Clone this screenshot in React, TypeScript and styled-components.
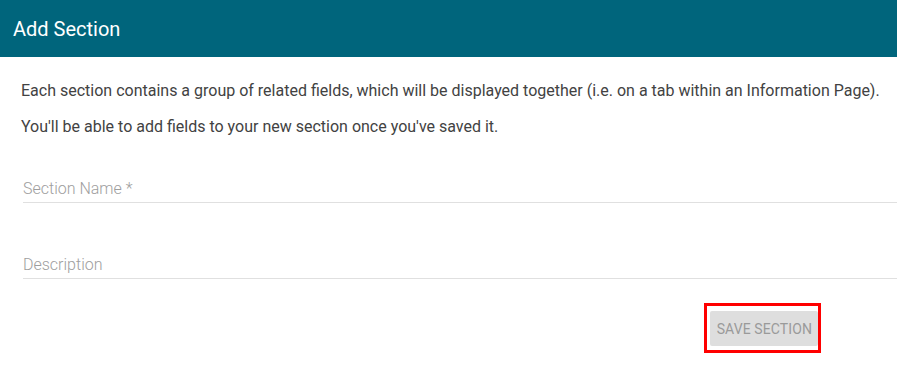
import styled, { createGlobalStyle } from "styled-components";

const GlobalStyle = createGlobalStyle`
  html, body {
    margin: 0;
    padding: 0;
    background: #ffffff;
    font-family: Roboto, "Liberation Sans", Arial, sans-serif;
  }
`;

const Dialog = styled.div`
  width: 897px;
  height: 368px;
  display: flex;
  flex-direction: column;
  background: #ffffff;
  overflow: hidden;
`;

const Header = styled.div`
  height: 57px;
  display: flex;
  align-items: center;
  padding: 0 13px;
  box-sizing: border-box;
  background: #00657c;
  color: #ffffff;
  font-size: 20px;
  font-weight: 400;
`;

const Body = styled.div`
  display: flex;
  flex-direction: column;
  padding: 24px 0 0 21px;
`;

const Intro = styled.p`
  margin: 0 0 17px;
  font-size: 16px;
  line-height: 19px;
  color: #424242;
`;

const Field = styled.label<{ top: number }>`
  display: block;
  margin: ${({ top }) => top}px 0 0 2px;
  padding-bottom: 3px;
  border-bottom: 1px solid #e0e0e0;
  font-size: 16px;
  font-weight: 300;
  line-height: 20px;
  color: #9e9e9e;
`;

const Actions = styled.div`
  display: flex;
  justify-content: flex-end;
  padding: 24px 76px 0 0;
`;

const Highlight = styled.div`
  border: 3px solid #ff0000;
  padding: 5px 0 4px 3px;
`;

const Button = styled.button`
  height: 35px;
  padding: 0 6px 0 7px;
  border: none;
  border-radius: 2px;
  background: #dedede;
  color: #9a9a9a;
  font-family: Roboto, "Liberation Sans", Arial, sans-serif;
  font-size: 14px;
  font-weight: 400;
  letter-spacing: 0.1px;
  text-transform: uppercase;
`;

export default function App() {
  return (
    <>
      <GlobalStyle />
      <Dialog>
        <Header>Add Section</Header>
        <Body>
          <Intro>
            Each section contains a group of related fields, which will be displayed together (i.e. on a tab within an Information Page).
          </Intro>
          <Intro>You'll be able to add fields to your new section once you've saved it.</Intro>
          <Field top={26}>Section Name *</Field>
          <Field top={52}>Description</Field>
          <Actions>
            <Highlight>
              <Button>Save Section</Button>
            </Highlight>
          </Actions>
        </Body>
      </Dialog>
    </>
  );
}
